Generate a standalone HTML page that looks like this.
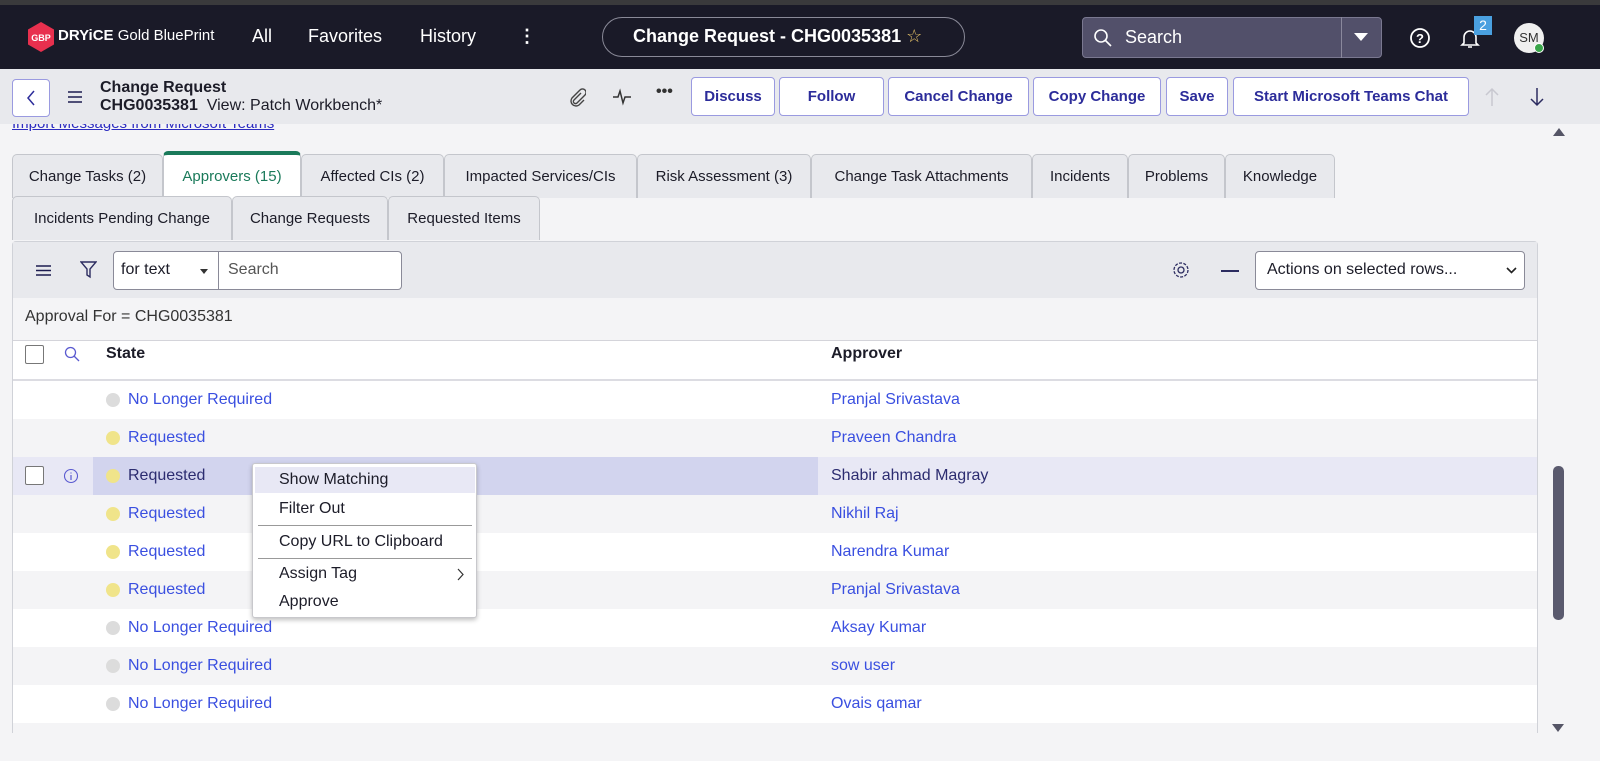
<!DOCTYPE html>
<html><head><meta charset="utf-8">
<style>
*{box-sizing:border-box;margin:0;padding:0}
body{width:1600px;height:733px;overflow:hidden;background:#f4f4f6;font-family:"Liberation Sans",sans-serif;position:relative;color:#1c1c28}
.a{position:absolute}
.top{left:0;top:0;width:1600px;height:5px;background:#3a3a3c}
.nav{left:0;top:5px;width:1600px;height:64px;background:#1a1a28;color:#fff}
.nav .t{position:absolute;font-size:18px;top:21px}
.hdr{left:0;top:69px;width:1600px;height:55px;background:#e8e9ed}
.btn{position:absolute;top:8px;height:39px;border:1px solid #9a9ae0;border-radius:4px;background:#fff;color:#2c2c9a;font-weight:bold;font-size:15px;display:flex;align-items:center;justify-content:center}
.tab{position:absolute;height:44px;background:#e8e9ed;border:1px solid #c4c6cc;border-bottom:none;border-radius:5px 5px 0 0;font-size:15px;display:flex;align-items:center;justify-content:center;color:#1c1c28}
.row{position:absolute;left:13px;width:1524px;height:38px}
.dot{position:absolute;left:93px;top:12px;width:14px;height:14px;border-radius:50%}
.st{position:absolute;left:115px;top:10px;font-size:16px;color:#3a4fe0}
.ap{position:absolute;left:818px;top:10px;font-size:16px;color:#3a4fe0}
.mi{position:absolute;left:26px;font-size:16px;color:#1c1c28}
</style></head><body>
<div class="a top"></div>
<div class="a nav">
  <svg class="a" style="left:27px;top:17px" width="28" height="30" viewBox="0 0 28 30"><polygon points="14,0 27,7.5 27,22.5 14,30 1,22.5 1,7.5" fill="#e8304e"/><text x="14" y="19" font-size="9" font-weight="bold" fill="#fff" text-anchor="middle" font-family="Liberation Sans">GBP</text></svg>
  <div class="t" style="left:58px;top:22px;font-size:15px"><b>DRYiCE</b> Gold BluePrint</div>
  <div class="t" style="left:252px">All</div>
  <div class="t" style="left:308px">Favorites</div>
  <div class="t" style="left:420px">History</div>
  <div class="t" style="left:518px;font-weight:bold">⋮</div>
  <div class="a" style="left:602px;top:12px;width:363px;height:40px;border:1px solid #8a8a98;border-radius:20px;"></div>
  <div class="t" style="left:633px;top:21px;font-weight:bold">Change Request - CHG0035381 <span style="color:#e8c468;font-weight:normal">☆</span></div>
  <div class="a" style="left:1082px;top:12px;width:300px;height:41px;background:#52506a;border:1px solid #7a7890;border-radius:4px"></div>
  <div class="a" style="left:1341px;top:12px;width:1px;height:41px;background:#8a889c"></div>
  <svg class="a" style="left:1093px;top:23px" width="20" height="20" viewBox="0 0 20 20"><circle cx="8" cy="8" r="6" fill="none" stroke="#fff" stroke-width="1.6"/><path d="M12.5 12.5L18 18" stroke="#fff" stroke-width="1.6"/></svg>
  <div class="t" style="left:1125px;top:22px">Search</div>
  <svg class="a" style="left:1354px;top:28px" width="14" height="8"><polygon points="0,0 14,0 7,8" fill="#fff"/></svg>
  <svg class="a" style="left:1409px;top:22px" width="22" height="22"><circle cx="11" cy="11" r="9" fill="none" stroke="#fff" stroke-width="1.8"/><text x="11" y="16" font-size="13" font-weight="bold" fill="#fff" text-anchor="middle" font-family="Liberation Sans">?</text></svg>
  <svg class="a" style="left:1460px;top:23px" width="20" height="22"><path d="M4 15V9a6 6 0 0112 0v6l2 2H2z M8 19h4" fill="none" stroke="#fff" stroke-width="1.6"/></svg>
  <div class="a" style="left:1474px;top:11px;width:18px;height:19px;background:#4aa0e0;font-size:14px;text-align:center;line-height:19px">2</div>
  <div class="a" style="left:1514px;top:18px;width:30px;height:30px;border-radius:50%;background:#f0f0f0;color:#333;font-size:13px;text-align:center;line-height:30px">SM</div>
  <div class="a" style="left:1534px;top:38px;width:10px;height:10px;border-radius:50%;background:#3aa64a;border:1px solid #fff"></div>
</div>
<div class="a hdr">
  <div class="a" style="left:12px;top:10px;width:38px;height:38px;border:1px solid #9a9ae0;border-radius:4px;background:#fff"></div>
  <svg class="a" style="left:25px;top:20px" width="12" height="18"><path d="M9 2L3 9l6 7" fill="none" stroke="#2c2c9a" stroke-width="1.5"/></svg>
  <svg class="a" style="left:67px;top:22px" width="16" height="12"><path d="M1 1h14M1 6h14M1 11h14" stroke="#1c1c50" stroke-width="1.6"/></svg>
  <div class="a" style="left:100px;top:10px;font-size:16px;font-weight:bold">Change Request</div>
  <div class="a" style="left:100px;top:28px;font-size:16px"><b>CHG0035381</b>&nbsp; View: Patch Workbench*</div>
  <svg class="a" style="left:568px;top:18px" width="18" height="20"><path d="M13 6l-7 7a2 2 0 003 3l8-8a3.5 3.5 0 00-5-5L4 11a5 5 0 007 7l5-5" fill="none" stroke="#444" stroke-width="1.4"/></svg>
  <svg class="a" style="left:612px;top:19px" width="20" height="18"><path d="M1 9h5l2-6 3 12 2-6h6" fill="none" stroke="#333" stroke-width="1.5"/></svg>
  <div class="a" style="left:656px;top:14px;font-size:16px;font-weight:bold;color:#333">•••</div>
  <div class="btn" style="left:691px;width:84px">Discuss</div>
  <div class="btn" style="left:779px;width:105px">Follow</div>
  <div class="btn" style="left:888px;width:141px">Cancel Change</div>
  <div class="btn" style="left:1033px;width:128px">Copy Change</div>
  <div class="btn" style="left:1166px;width:62px">Save</div>
  <div class="btn" style="left:1233px;width:236px">Start Microsoft Teams Chat</div>
  <svg class="a" style="left:1484px;top:18px" width="16" height="20"><path d="M8 19V2M2 8l6-6 6 6" fill="none" stroke="#c8c8d0" stroke-width="1.5"/></svg>
  <svg class="a" style="left:1529px;top:18px" width="16" height="20"><path d="M8 1v17M2 12l6 6 6-6" fill="none" stroke="#2c2c60" stroke-width="1.5"/></svg>
</div>
<div class="a" style="left:12px;top:115px;font-size:15px;color:#2c2cc0;text-decoration:underline;clip-path:inset(9px 0 0 0)">Import Messages from Microsoft Teams</div>
<svg class="a" style="left:1553px;top:128px" width="12" height="8"><polygon points="0,8 12,8 6,0" fill="#555566"/></svg>
<!-- tabs -->
<div class="tab" style="left:12px;top:154px;width:151px">Change Tasks (2)</div>
<div class="tab" style="left:163px;top:151px;width:138px;height:47px;background:#fff;border-top:4px solid #1a7a5a;color:#1a7a5a">Approvers (15)</div>
<div class="tab" style="left:301px;top:154px;width:143px">Affected CIs (2)</div>
<div class="tab" style="left:444px;top:154px;width:193px">Impacted Services/CIs</div>
<div class="tab" style="left:637px;top:154px;width:174px">Risk Assessment (3)</div>
<div class="tab" style="left:811px;top:154px;width:221px">Change Task Attachments</div>
<div class="tab" style="left:1032px;top:154px;width:96px">Incidents</div>
<div class="tab" style="left:1128px;top:154px;width:97px">Problems</div>
<div class="tab" style="left:1225px;top:154px;width:110px">Knowledge</div>
<div class="tab" style="left:12px;top:196px;width:220px">Incidents Pending Change</div>
<div class="tab" style="left:232px;top:196px;width:156px">Change Requests</div>
<div class="tab" style="left:388px;top:196px;width:152px">Requested Items</div>
<!-- panel -->
<div class="a" style="left:12px;top:241px;width:1526px;height:492px;border:1px solid #d0d2d8;border-bottom:none;border-radius:4px 4px 0 0;background:#fff"></div>
<div class="a" style="left:13px;top:242px;width:1524px;height:56px;background:#e8e9ed"></div>
<svg class="a" style="left:36px;top:265px" width="15" height="11"><path d="M0 1h15M0 5.5h15M0 10h15" stroke="#1c1c50" stroke-width="1.5"/></svg>
<svg class="a" style="left:80px;top:261px" width="17" height="18"><path d="M1 1h15l-6 7v8l-3-2V8z" fill="none" stroke="#2c2c60" stroke-width="1.4"/></svg>
<div class="a" style="left:113px;top:251px;width:289px;height:39px;border:1px solid #8a8a98;border-radius:4px;background:#fff"></div>
<div class="a" style="left:218px;top:252px;width:1px;height:37px;background:#8a8a98"></div>
<div class="a" style="left:121px;top:261px;font-size:16px">for text</div>
<svg class="a" style="left:200px;top:269px" width="8" height="5"><polygon points="0,0 8,0 4,5" fill="#333"/></svg>
<div class="a" style="left:228px;top:261px;font-size:16px;color:#555">Search</div>
<svg class="a" style="left:1172px;top:261px" width="18" height="18"><circle cx="9" cy="9" r="3" fill="none" stroke="#2c2c60" stroke-width="1.3"/><circle cx="9" cy="9" r="7" fill="none" stroke="#2c2c60" stroke-width="1.3" stroke-dasharray="3 1.4"/></svg>
<div class="a" style="left:1221px;top:270px;width:18px;height:2px;background:#2c2c60"></div>
<div class="a" style="left:1255px;top:251px;width:270px;height:39px;border:1px solid #8a8a98;border-radius:4px;background:#fff"></div>
<div class="a" style="left:1267px;top:261px;font-size:16px">Actions on selected rows...</div>
<svg class="a" style="left:1506px;top:267px" width="11" height="7"><path d="M1 1l4.5 4.5L10 1" fill="none" stroke="#222" stroke-width="1.6"/></svg>
<div class="a" style="left:13px;top:298px;width:1524px;height:43px;background:#f4f4f6;border-bottom:1px solid #d4d4da"></div>
<div class="a" style="left:25px;top:308px;font-size:16px;color:#333">Approval For = CHG0035381</div>
<div class="a" style="left:13px;top:342px;width:1524px;height:39px;background:#fff;border-bottom:2px solid #dcdce2"></div>
<div class="a" style="left:25px;top:345px;width:19px;height:19px;border:1px solid #777;border-radius:2px;background:#fff"></div>
<svg class="a" style="left:64px;top:346px" width="16" height="16"><circle cx="6.5" cy="6.5" r="5" fill="none" stroke="#5a5ad0" stroke-width="1.3"/><path d="M10 10l5 5" stroke="#5a5ad0" stroke-width="1.3"/></svg>
<div class="a" style="left:106px;top:345px;font-size:16px;font-weight:bold">State</div>
<div class="a" style="left:831px;top:345px;font-size:16px;font-weight:bold">Approver</div>

<div class="row" style="top:381px;background:#fff"><div class="dot" style="background:#dcdcdc"></div><div class="st">No Longer Required</div><div class="ap">Pranjal Srivastava</div></div>
<div class="row" style="top:419px;background:#f4f4f6"><div class="dot" style="background:#f0e48a"></div><div class="st">Requested</div><div class="ap">Praveen Chandra</div></div>
<div class="row" style="top:457px;background:#e8e8f5"><div class="a" style="left:80px;top:0;width:725px;height:38px;background:#d2d4ee"></div>
 <div class="a" style="left:12px;top:9px;width:19px;height:19px;border:1px solid #777;border-radius:2px;background:#fff"></div>
 <svg class="a" style="left:50px;top:11px" width="16" height="16"><circle cx="8" cy="8" r="6.5" fill="none" stroke="#5a5ad0" stroke-width="1.1"/><path d="M8 7v5M8 4.5v1" stroke="#5a5ad0" stroke-width="1.2"/></svg>
 <div class="dot" style="background:#f0e48a"></div><div class="st" style="color:#2c2c70">Requested</div><div class="ap" style="color:#2c2c70">Shabir ahmad Magray</div></div>
<div class="row" style="top:495px;background:#f4f4f6"><div class="dot" style="background:#f0e48a"></div><div class="st">Requested</div><div class="ap">Nikhil Raj</div></div>
<div class="row" style="top:533px;background:#fff"><div class="dot" style="background:#f0e48a"></div><div class="st">Requested</div><div class="ap">Narendra Kumar</div></div>
<div class="row" style="top:571px;background:#f4f4f6"><div class="dot" style="background:#f0e48a"></div><div class="st">Requested</div><div class="ap">Pranjal Srivastava</div></div>
<div class="row" style="top:609px;background:#fff"><div class="dot" style="background:#dcdcdc"></div><div class="st">No Longer Required</div><div class="ap">Aksay Kumar</div></div>
<div class="row" style="top:647px;background:#f4f4f6"><div class="dot" style="background:#dcdcdc"></div><div class="st">No Longer Required</div><div class="ap">sow user</div></div>
<div class="row" style="top:685px;background:#fff"><div class="dot" style="background:#dcdcdc"></div><div class="st">No Longer Required</div><div class="ap">Ovais qamar</div></div>
<div class="row" style="top:723px;background:#f4f4f6"></div>

<!-- context menu -->
<div class="a" style="left:252px;top:463px;width:225px;height:155px;background:#fff;border:1px solid #c8c8cc;border-radius:3px;box-shadow:0 2px 5px rgba(0,0,0,.25)">
  <div class="a" style="left:2px;top:3px;width:220px;height:26px;background:#e8e8f5"></div>
  <div class="mi" style="top:7px">Show Matching</div>
  <div class="mi" style="top:36px">Filter Out</div>
  <div class="a" style="left:5px;top:61px;width:214px;height:1px;background:#999"></div>
  <div class="mi" style="top:69px">Copy URL to Clipboard</div>
  <div class="a" style="left:5px;top:94px;width:214px;height:1px;background:#999"></div>
  <div class="mi" style="top:101px">Assign Tag</div>
  <svg class="a" style="left:204px;top:104px" width="8" height="13"><path d="M1 1l5 5.5L1 12" fill="none" stroke="#333" stroke-width="1.2"/></svg>
  <div class="mi" style="top:129px">Approve</div>
</div>
<!-- scrollbar -->
<div class="a" style="left:1553px;top:466px;width:11px;height:154px;border-radius:5px;background:#5a5a6e"></div>
<svg class="a" style="left:1552px;top:724px" width="12" height="8"><polygon points="0,0 12,0 6,8" fill="#555566"/></svg>
</body></html>
